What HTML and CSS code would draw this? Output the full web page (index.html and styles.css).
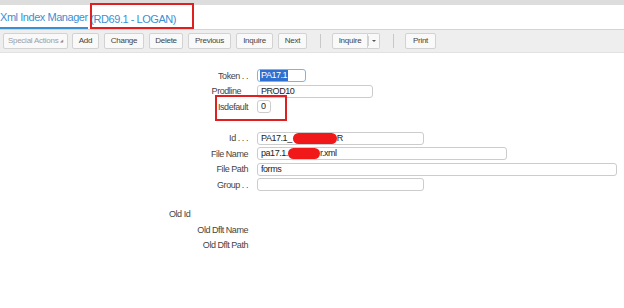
FILE: index.html
```html
<!DOCTYPE html>
<html>
<head>
<meta charset="utf-8">
<link rel="stylesheet" href="styles.css">
</head>
<body>
<div class="page">
  <div class="strip"></div>
  <div class="titlebar">
    <span class="title-main">Xml Index Manager</span><span class="title-sub"> (RD69.1 - LOGAN)</span>
    <div class="annot annot-title"></div>
  </div>
  <div class="toolbar">
    <button class="btn btn-special">Special Actions <span class="tri">◢</span></button>
    <button class="btn w-add">Add</button>
    <button class="btn w-change">Change</button>
    <button class="btn w-delete">Delete</button>
    <button class="btn w-prev">Previous</button>
    <button class="btn w-inq">Inquire</button>
    <button class="btn w-next">Next</button>
    <span class="sep"></span>
    <div class="split">
      <button class="btn split-main">Inquire</button><button class="btn split-arrow"><span class="caret"></span></button>
    </div>
    <span class="sep"></span>
    <button class="btn w-print">Print</button>
  </div>
  <div class="form">
    <div class="row">
      <div class="label">Token . .</div>
      <div class="field f-token focus"><span class="sel">PA17.1</span></div>
    </div>
    <div class="row">
      <div class="label label-prod">Prodline</div>
      <div class="field f-prod">PROD10</div>
    </div>
    <div class="row">
      <div class="label">Isdefault</div>
      <div class="field f-def">0</div>
    </div>
    <div class="spacer"></div>
    <div class="row">
      <div class="label">Id . . .</div>
      <div class="field f-id">PA17.1_<span class="redact r1"></span>R</div>
    </div>
    <div class="row">
      <div class="label">File Name</div>
      <div class="field f-name">pa17.1.<span class="redact r2"></span>r.xml</div>
    </div>
    <div class="row">
      <div class="label">File Path</div>
      <div class="field f-path">forms</div>
    </div>
    <div class="row">
      <div class="label">Group . .</div>
      <div class="field f-group"></div>
    </div>
    <div class="old">
      <div class="old-id">Old Id</div>
      <div class="old-row">Old Dflt Name</div>
      <div class="old-row">Old Dflt Path</div>
    </div>
    <div class="annot annot-def"></div>
  </div>
</div>
</body>
</html>
```
FILE: styles.css
```css
html, body {
  margin: 0;
  padding: 0;
  background: #ffffff;
}
body {
  font-family: "Liberation Sans", Arial, sans-serif;
  color: #333333;
  width: 624px;
  height: 308px;
  overflow: hidden;
}
.page {
  position: relative;
}
.strip {
  height: 5px;
  background: #dddddd;
}
.titlebar {
  position: relative;
  height: 24px;
  display: flex;
  align-items: flex-end;
  font-size: 11px;
  letter-spacing: -0.45px;
  color: #3b8fd5;
  white-space: nowrap;
}
.title-main {
  display: inline-block;
  height: 20px;
  line-height: 21px;
  border-bottom: 2px solid #3b8fd5;
}
.title-sub {
  display: inline-block;
  height: 20px;
  line-height: 21px;
  white-space: pre;
}
.annot {
  position: absolute;
  border: 2px solid #e02020;
  box-sizing: border-box;
}
.annot-title {
  left: 90px;
  top: -2px;
  width: 104px;
  height: 26px;
}
.toolbar {
  height: 24px;
  box-sizing: border-box;
  border-top: 1px solid #d4d4d4;
  border-bottom: 1px solid #e2e2e2;
  background: #eeeeee;
  display: flex;
  align-items: center;
  padding-left: 3px;
}
.btn {
  font-family: "Liberation Sans", Arial, sans-serif;
  font-size: 8px;
  letter-spacing: -0.25px;
  color: #444444;
  height: 16px;
  box-sizing: border-box;
  padding: 0;
  border: 1px solid #d2d2d2;
  border-radius: 2px;
  background: #f9f9f9;
  margin-right: 5px;
  line-height: 14px;
  white-space: nowrap;
  flex: none;
}
.btn-special {
  width: 65px;
  color: #a0a0a0;
  margin-right: 4px;
}
.tri {
  font-size: 4px;
  color: #888888;
  vertical-align: middle;
}
.w-add { width: 27px; }
.w-change { width: 40px; }
.w-delete { width: 34px; }
.w-prev { width: 43px; }
.w-inq { width: 37px; }
.w-next { width: 29px; margin-right: 0; }
.w-print { width: 31px; }
.sep {
  width: 1px;
  height: 14px;
  background: #c8c8c8;
  margin: 0 11px 0 13px;
  flex: none;
}
.split {
  display: flex;
}
.split-main {
  width: 36px;
  margin-right: 0;
  border-radius: 2px 0 0 2px;
}
.split-arrow {
  width: 12px;
  margin-right: 0;
  border-left: none;
  border-radius: 0 2px 2px 0;
  display: flex;
  align-items: center;
  justify-content: center;
  position: relative;
}
.split-arrow::before {
  content: "";
  position: absolute;
  left: 0;
  top: 2px;
  bottom: 2px;
  width: 1px;
  background: #d2d2d2;
}
.caret {
  width: 0;
  height: 0;
  border-left: 2px solid transparent;
  border-right: 2px solid transparent;
  border-top: 2px solid #555555;
}
.form {
  position: relative;
  padding-top: 16px;
  font-size: 9px;
  letter-spacing: -0.45px;
  color: #444444;
}
.row {
  display: flex;
  align-items: center;
  height: 13px;
  margin-bottom: 2.5px;
}
.label {
  width: 248px;
  text-align: right;
  box-sizing: border-box;
  margin-right: 9px;
  white-space: nowrap;
  flex: none;
}
.label-prod {
  padding-right: 7px;
}
.field {
  height: 13px;
  box-sizing: border-box;
  border: 1px solid #cccccc;
  border-radius: 3px;
  padding-left: 3px;
  font-size: 9px;
  line-height: 11px;
  color: #222222;
  white-space: nowrap;
  display: flex;
  align-items: center;
  flex: none;
}
.focus {
  border-color: #7fb3e6;
  padding-left: 2px;
}
.sel {
  background: #2f6fd0;
  color: #ffffff;
  padding: 0 1px;
  line-height: 11px;
}
.f-token { width: 49px; }
.f-prod { width: 116px; }
.f-def { width: 14px; }
.f-id { width: 167px; }
.f-name { width: 250px; }
.f-path { width: 360px; }
.f-group { width: 167px; }
.redact {
  display: inline-block;
  background: #f01818;
  height: 11px;
  border-radius: 6px;
}
.r1 { width: 44px; margin-left: 1px; }
.r2 { width: 32px; }
.spacer {
  height: 16px;
}
.old {
  padding-top: 14px;
}
.old-id {
  padding-left: 169px;
  height: 16px;
  line-height: 12px;
}
.old-row {
  width: 248px;
  text-align: right;
  height: 15.5px;
  line-height: 12px;
}
.annot-def {
  left: 215px;
  top: 42px;
  width: 72px;
  height: 26px;
}
```
